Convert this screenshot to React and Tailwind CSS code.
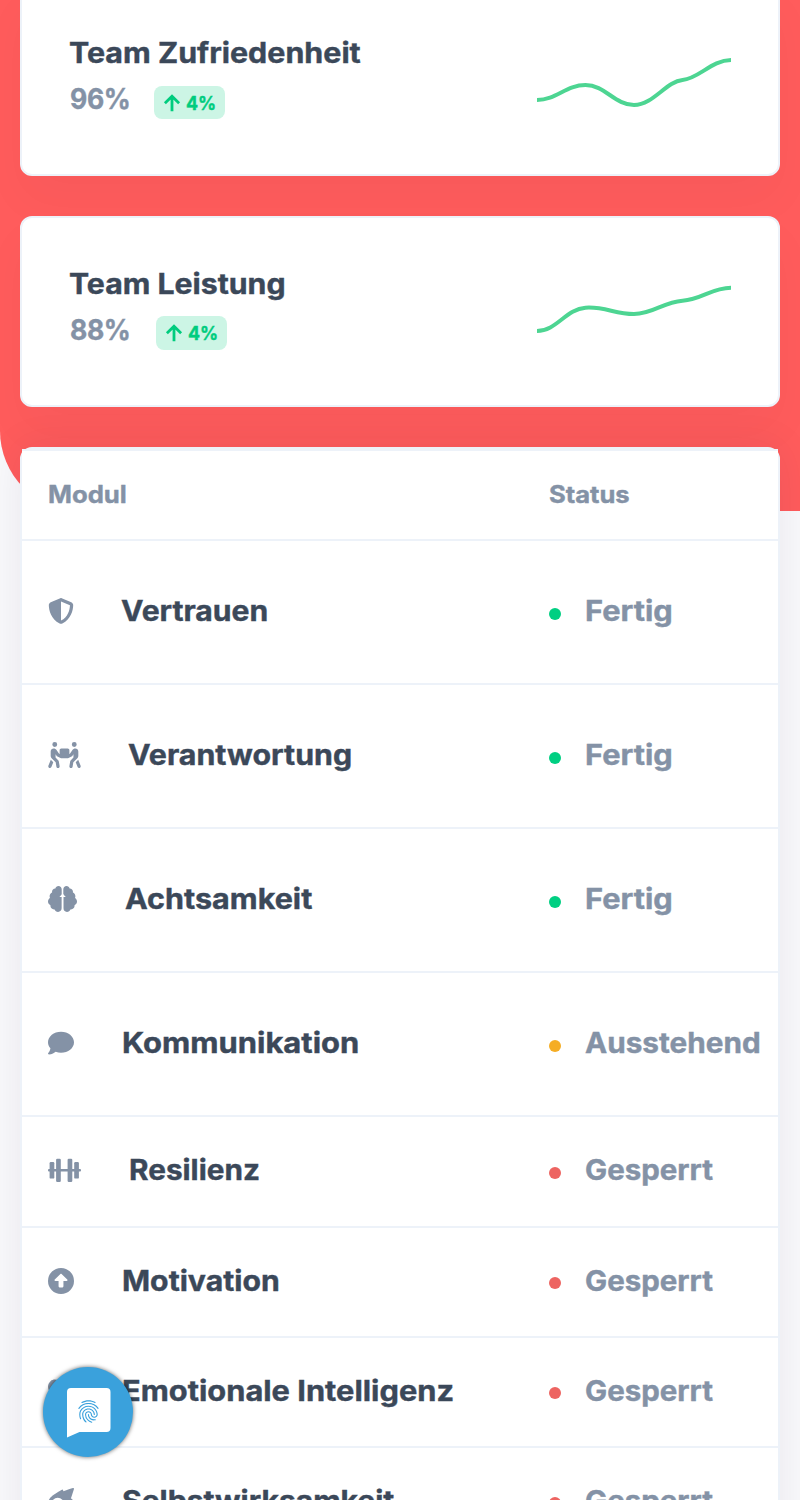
import React from "react";
import { FaBrain, FaHeart, FaMeteor } from "react-icons/fa";
import { FaShieldHalved, FaPeopleCarryBox, FaCircleUp, FaComment } from "react-icons/fa6";
import { MdFingerprint } from "react-icons/md";

function Label({ className, children }) {
  return <span className={`inline-block origin-left whitespace-nowrap ${className}`}>{children}</span>;
}

function Dumbbell({ className }) {
  return (
    <svg viewBox="0 0 33 26" className={className} fill="currentColor">
      <rect x="0" y="12" width="33" height="2.6" rx="1" />
      <rect x="1.6" y="5" width="4.7" height="16.6" rx="1.2" />
      <rect x="8.1" y="1.7" width="4.7" height="23.2" rx="1.2" />
      <rect x="19.6" y="1.7" width="4.7" height="23.2" rx="1.2" />
      <rect x="26.2" y="5" width="4.7" height="16.6" rx="1.2" />
    </svg>
  );
}

function Brain({ className }) {
  return (
    <span className={`relative ${className}`}>
      <FaBrain className="h-full w-full" />
      <svg viewBox="0 0 29 26" className="absolute inset-0 h-full w-full">
        <path d="M14.6 7.6 L17.8 11 H11.4 Z M13.9 10 h1.4 v16 h-1.4 Z" fill="#fff" />
      </svg>
    </span>
  );
}

function StatCard({ title, titleClass, value, valueClass, rowClass, badgeClass, path, sparkClass }) {
  return (
    <section className="flex h-[191px] shrink-0 justify-between rounded-[12px] border-2 border-[#edf2f9] bg-white pr-[47px] pl-12 shadow-[0_24px_48px_rgba(18,38,63,0.03)]">
      <div className="pt-[51px]">
        <h2 className="-ml-px h-[30px] text-[28px] leading-[30px] text-[#3b4859]">
          <Label className={titleClass}>{title}</Label>
        </h2>
        <div className={`flex items-start ${rowClass}`}>
          <div className={`text-[28px] leading-[26px] text-[#8492a6] ${valueClass}`}>
            <Label className="scale-x-[0.95] tracking-[-0.4px]">{value}</Label>
          </div>
          <div className={`flex w-[71px] items-center gap-[5px] rounded-[8px] bg-[#ccf5e5] pl-[9px] text-[#00cc7e] ${badgeClass}`}>
            <svg viewBox="0 0 18 18" className="size-[18px] shrink-0" fill="none" stroke="currentColor" strokeWidth="2.8">
              <path d="M9 17.2V2.5M1.9 9.2 9 2.3l7.1 6.9" />
            </svg>
            <Label className="scale-x-[0.96] text-[18.6px] leading-[34px]">4%</Label>
          </div>
        </div>
      </div>
      <svg viewBox="0 0 194 60" className={`h-[60px] w-[194px] ${sparkClass}`} fill="none" stroke="#4dd592" strokeWidth="4">
        <path d={path} />
      </svg>
    </section>
  );
}

const GREEN = "bg-[#00cf82]";
const AMBER = "bg-[#f5ad24]";
const RED = "bg-[#ed6461]";

const FERTIG = { label: "Fertig", scale: "scale-x-[1.1]", dot: GREEN };
const AUSSTEHEND = { label: "Ausstehend", scale: "scale-x-[1.062]", dot: AMBER };
const GESPERRT = { label: "Gesperrt", scale: "scale-x-[1.053]", dot: RED };

const MODULES = [
  { name: "Vertrauen", scale: "-ml-px scale-x-[1.076]", Icon: FaShieldHalved, size: "w-[26px]", row: "h-[144px] pb-0.5", dotOffset: "mt-1.5", status: FERTIG },
  { name: "Verantwortung", scale: "-ml-px scale-x-[1.084]", Icon: FaPeopleCarryBox, size: "w-[33px]", row: "h-[144px] pb-0.5", dotOffset: "mt-1.5", status: FERTIG },
  { name: "Achtsamkeit", scale: "scale-x-[1.09]", Icon: Brain, size: "w-[29px]", row: "h-[144px] pb-0.5", dotOffset: "mt-1.5", status: FERTIG },
  { name: "Kommunikation", scale: "scale-x-[1.105]", Icon: FaComment, size: "w-[26px]", row: "h-[144px] pb-0.5", dotOffset: "mt-1.5", status: AUSSTEHEND },
  { name: "Resilienz", scale: "scale-x-[1.062]", Icon: Dumbbell, size: "w-[33px]", row: "h-[111px] pb-[3px]", dotOffset: "mt-1.5", status: GESPERRT },
  { name: "Motivation", scale: "scale-x-[1.078]", Icon: FaCircleUp, size: "w-[26px]", row: "h-[110px] pb-0.5", dotOffset: "mt-1", status: GESPERRT },
  { name: "Emotionale Intelligenz", scale: "scale-x-[1.1]", Icon: FaHeart, size: "w-[26px]", row: "h-[110px] pb-0.5", dotOffset: "mt-1", status: GESPERRT },
  { name: "Selbstwirksamkeit", scale: "scale-x-[1.073]", Icon: FaMeteor, size: "w-[26px]", row: "h-[110px] pb-0.5", dotOffset: "mt-1", status: GESPERRT },
];

function ModuleRow({ name, scale, Icon, size, row, dotOffset, status }) {
  return (
    <div className={`flex items-center border-b-2 border-[#edf2f9] pl-[26px] text-[28px] leading-[34px] ${row}`}>
      <div className="flex w-[501px] items-center gap-12">
        <Icon className={`h-[26px] shrink-0 text-[#8492a6] ${size}`} />
        <Label className={`text-[#3b4859] ${scale}`}>{name}</Label>
      </div>
      <div className="flex items-center gap-6">
        <span className={`size-3 shrink-0 rounded-full ${dotOffset} ${status.dot}`} />
        <Label className={`text-[#8492a6] ${status.scale}`}>{status.label}</Label>
      </div>
    </div>
  );
}

export default function App() {
  return (
    <div className="relative isolate h-[1500px] overflow-hidden bg-[#f9f9fb] font-['Inter',sans-serif] font-bold [-webkit-text-stroke:0.4px_currentColor]">
      <div className="absolute inset-x-0 top-0 -z-10 h-[511px] rounded-bl-[80px] bg-[#ff5c5c]" />
      <main className="-mt-[15px] flex flex-col gap-10 px-5">
        <StatCard
          title="Team Zufriedenheit"
          titleClass="scale-x-[1.086]"
          value="96%"
          valueClass="w-[84px]"
          rowClass="mt-[18px]"
          badgeClass="h-[33px]"
          sparkClass="mt-[63px]"
          path="M0 50C19.4 50 29 35 48.5 35S77.6 55 97 55 129 31.500 145.500 30 174.600 10 194 10"
        />
        <StatCard
          title="Team Leistung"
          titleClass="scale-x-[1.08]"
          value="88%"
          valueClass="w-[86px] pt-px"
          rowClass="mt-[17px]"
          badgeClass="h-[34px]"
          sparkClass="mt-[60px]"
          path="M0 53C19.400 53 29 31 48.500 29.700S77.600 36 97 36 126 24 145.500 22.700 174.600 9.700 194 9.700"
        />
        <section className="rounded-[12px] border-2 border-[#edf2f9] bg-white shadow-[0_0_40px_rgba(35,20,80,0.08)]">
          <div className="flex h-[92px] items-center border-y-2 border-[#edf2f9] bg-white pb-px pl-[26px] text-[24px] leading-[30px] text-[#8492a6]">
            <div className="w-[501px]">
              <Label className="scale-x-[1.07]">Modul</Label>
            </div>
            <Label className="scale-x-[1.065]">Status</Label>
          </div>
          {MODULES.map((m) => (
            <ModuleRow key={m.name} {...m} />
          ))}
        </section>
      </main>
      <button
        type="button"
        aria-label="Chat"
        className="absolute top-[1367px] left-[43px] size-[90px] rounded-full bg-[#3aa1dc] shadow-[0_0_4px_rgba(0,0,0,0.6)]"
      >
        <svg viewBox="0 0 90 90" className="size-full" fill="#fff">
          <path d="M28 21H63.5a4 4 0 0 1 4 4V61a4 4 0 0 1-4 4H36.5L24 70.5V25a4 4 0 0 1 4-4Z" />
        </svg>
        <MdFingerprint className="absolute top-[31px] left-[32px] size-[27px] text-[#3aa1dc]" />
      </button>
    </div>
  );
}
